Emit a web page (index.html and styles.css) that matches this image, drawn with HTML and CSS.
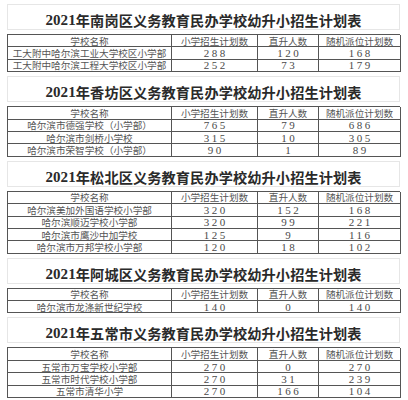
FILE: index.html
```html
<!DOCTYPE html>
<html lang="zh">
<head>
<meta charset="utf-8">
<link rel="stylesheet" href="styles.css">
</head>
<body>
<div class="sheet">
  <section class="block">
    <div class="title"><span class="num">2021</span>年南岗区义务教育民办学校幼升小招生计划表</div>
    <div class="plan">
      <div class="cell">学校名称</div><div class="cell">小学招生计划数</div><div class="cell">直升人数</div><div class="cell">随机派位计划数</div>
      <div class="cell">工大附中哈尔滨工业大学校区小学部</div><div class="cell n">288</div><div class="cell n">120</div><div class="cell n">168</div>
      <div class="cell">工大附中哈尔滨工程大学校区小学部</div><div class="cell n">252</div><div class="cell n">73</div><div class="cell n">179</div>
    </div>
  </section>
  <section class="block">
    <div class="title"><span class="num">2021</span>年香坊区义务教育民办学校幼升小招生计划表</div>
    <div class="plan">
      <div class="cell">学校名称</div><div class="cell">小学招生计划数</div><div class="cell">直升人数</div><div class="cell">随机派位计划数</div>
      <div class="cell">哈尔滨市德强学校（小学部）</div><div class="cell n">765</div><div class="cell n">79</div><div class="cell n">686</div>
      <div class="cell">哈尔滨市剑桥小学校</div><div class="cell n">315</div><div class="cell n">10</div><div class="cell n">305</div>
      <div class="cell">哈尔滨市荣智学校（小学部）</div><div class="cell n">90</div><div class="cell n">1</div><div class="cell n">89</div>
    </div>
  </section>
  <section class="block">
    <div class="title"><span class="num">2021</span>年松北区义务教育民办学校幼升小招生计划表</div>
    <div class="plan">
      <div class="cell">学校名称</div><div class="cell">小学招生计划数</div><div class="cell">直升人数</div><div class="cell">随机派位计划数</div>
      <div class="cell">哈尔滨美加外国语学校小学部</div><div class="cell n">320</div><div class="cell n">152</div><div class="cell n">168</div>
      <div class="cell">哈尔滨顺迈学校小学部</div><div class="cell n">320</div><div class="cell n">99</div><div class="cell n">221</div>
      <div class="cell">哈尔滨市鹰沙中加学校</div><div class="cell n">125</div><div class="cell n">9</div><div class="cell n">116</div>
      <div class="cell">哈尔滨市万邦学校小学部</div><div class="cell n">120</div><div class="cell n">18</div><div class="cell n">102</div>
    </div>
  </section>
  <section class="block">
    <div class="title"><span class="num">2021</span>年阿城区义务教育民办学校幼升小招生计划表</div>
    <div class="plan">
      <div class="cell">学校名称</div><div class="cell">小学招生计划数</div><div class="cell">直升人数</div><div class="cell">随机派位计划数</div>
      <div class="cell">哈尔滨市龙涤新世纪学校</div><div class="cell n">140</div><div class="cell n">0</div><div class="cell n">140</div>
    </div>
  </section>
  <section class="block">
    <div class="title"><span class="num">2021</span>年五常市义务教育民办学校幼升小招生计划表</div>
    <div class="plan">
      <div class="cell">学校名称</div><div class="cell">小学招生计划数</div><div class="cell">直升人数</div><div class="cell">随机派位计划数</div>
      <div class="cell">五常市万宝学校小学部</div><div class="cell n">270</div><div class="cell n">0</div><div class="cell n">270</div>
      <div class="cell">五常市时代学校小学部</div><div class="cell n">270</div><div class="cell n">31</div><div class="cell n">239</div>
      <div class="cell">五常市清华小学</div><div class="cell n">270</div><div class="cell n">166</div><div class="cell n">104</div>
    </div>
  </section>
</div>
</body>
</html>
```

FILE: styles.css
```css
html, body {
  margin: 0;
  padding: 0;
  background: #ffffff;
}
body {
  width: 408px;
  height: 400px;
  overflow: hidden;
  font-family: "Liberation Serif", "Noto Sans CJK SC", serif;
}
.sheet {
  padding-left: 7px;
  width: 393px;
}
.block {
  display: flex;
  flex-direction: column;
}
.title {
  height: 26px;
  margin-top: 4px;
  margin-bottom: 4px;
  box-sizing: border-box;
  border: 1px solid #e6e6e6;
  display: flex;
  align-items: center;
  justify-content: center;
  padding-top: 6px;
  font-family: "Noto Sans CJK SC", sans-serif;
  font-weight: 700;
  font-size: 14.2px;
  line-height: 16px;
  color: #2a2a2a;
  letter-spacing: 0.1px;
}
.title .num {
  font-family: "Liberation Serif", serif;
  font-weight: 700;
  font-size: 15px;
}
.plan {
  display: grid;
  grid-template-columns: 164px 86px 61px 82px;
  grid-auto-rows: 12.4px;
  border-top: 1px solid #555;
  border-left: 1px solid #555;
  width: 393px;
  box-sizing: border-box;
}
.cell {
  box-sizing: border-box;
  border-right: 1px solid #555;
  border-bottom: 1px solid #555;
  display: flex;
  align-items: center;
  justify-content: center;
  overflow: hidden;
  white-space: nowrap;
  font-family: "Noto Sans CJK SC", sans-serif;
  font-size: 9.6px;
  line-height: 10px;
  color: #555;
}
.cell.n {
  font-family: "Liberation Serif", serif;
  font-size: 11px;
  line-height: 10px;
  letter-spacing: 2.4px;
  text-indent: 2.4px;
  color: #4a4a4a;
}
```
